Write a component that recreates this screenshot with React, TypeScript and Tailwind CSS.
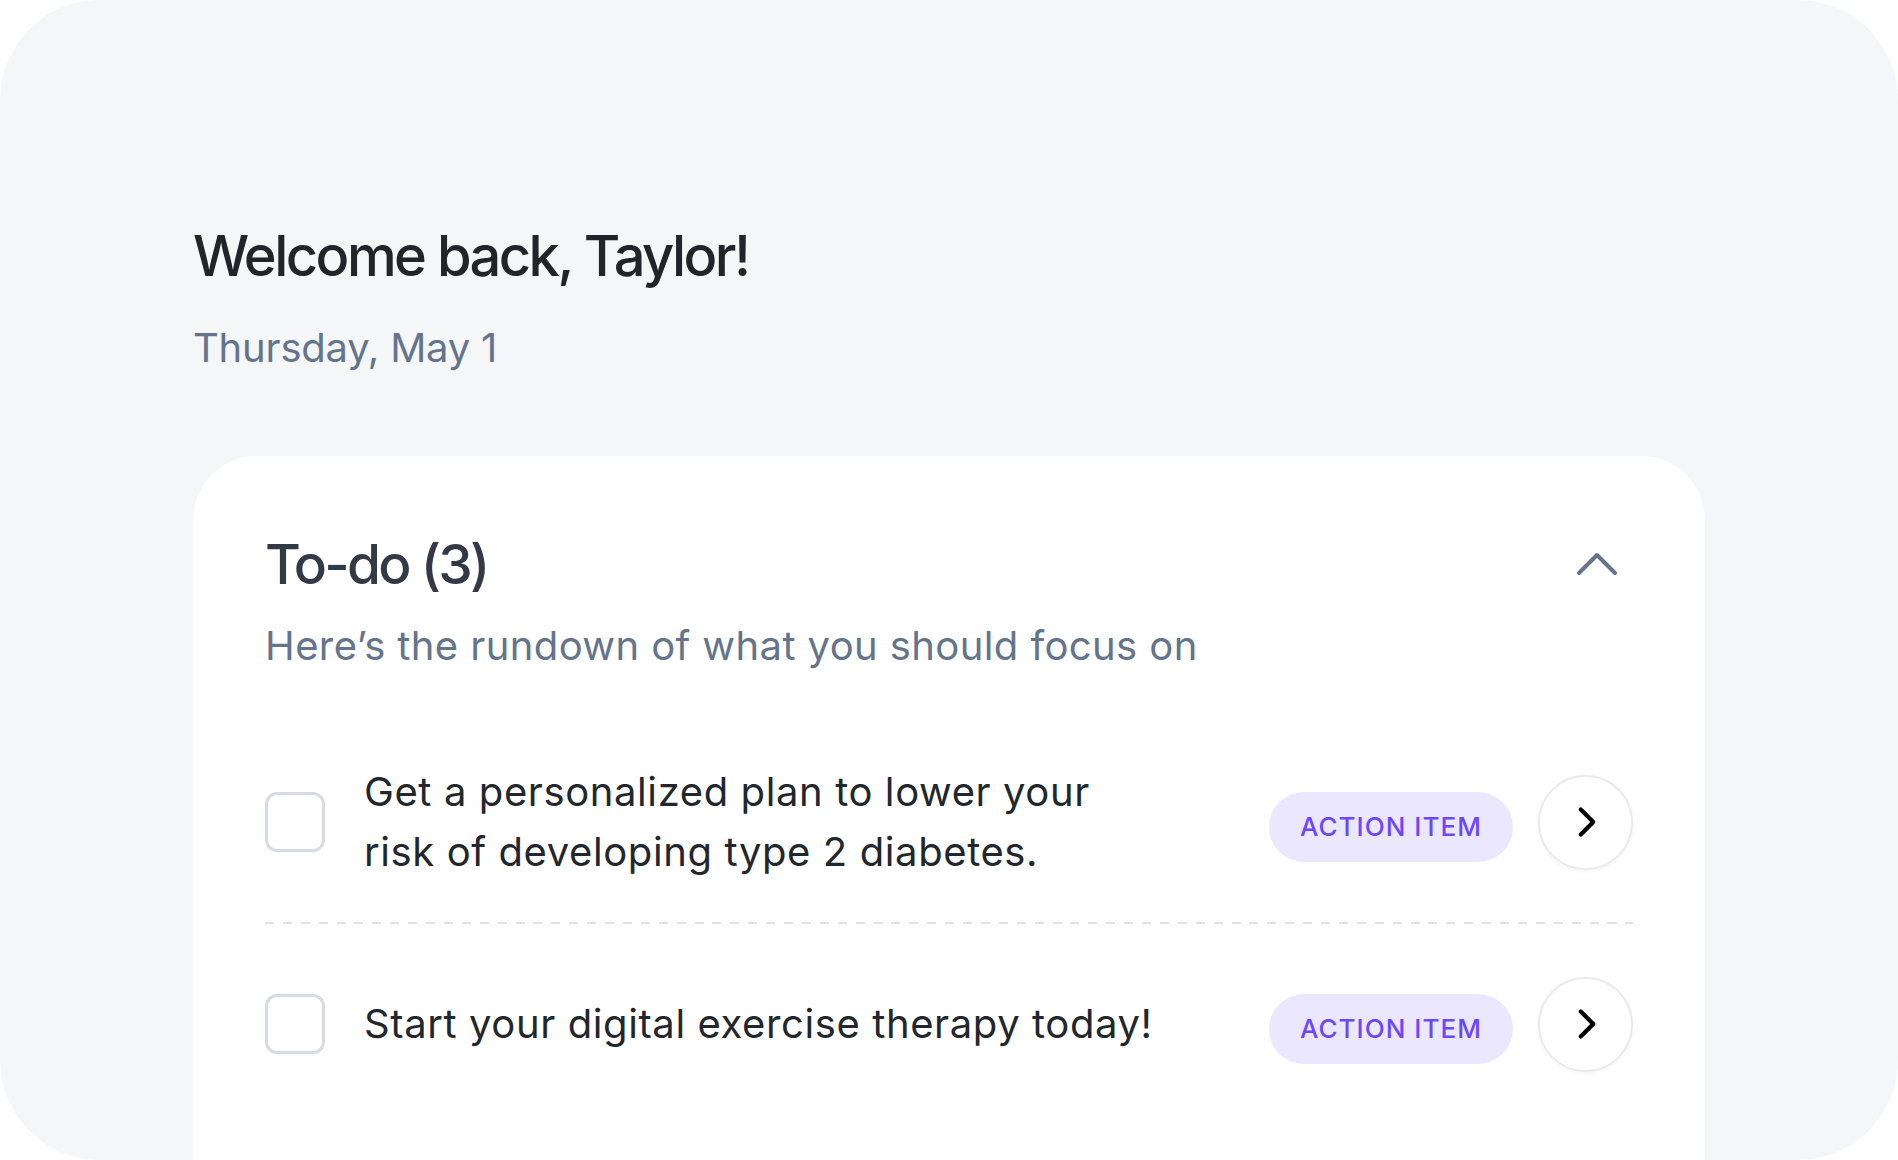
import { ChevronRight, ChevronUp } from "lucide-react";

function Badge() {
  return (
    <div className="mt-[10px] flex h-[70px] shrink-0 items-center rounded-full bg-[#ebe7fe] px-[31px] text-[26px] font-medium leading-none tracking-[0.04em] text-[#6c47ff]">
      ACTION ITEM
    </div>
  );
}

function GoButton() {
  return (
    <div className="ml-[25px] flex h-[95px] w-[95px] shrink-0 items-center justify-center rounded-full border-2 border-[#e9eaf0] bg-white shadow-[0_2px_4px_rgba(0,0,0,0.04)]">
      <ChevronRight size={50} strokeWidth={2} color="#000000" className="ml-[3px]" />
    </div>
  );
}

function Checkbox() {
  return <div className="h-[60px] w-[60px] shrink-0 rounded-[12px] border-[3px] border-[#d6dbe4] bg-white" />;
}

export default function App() {
  return (
    <div className="min-h-screen bg-white font-[Inter,sans-serif]">
      <div className="h-[1160px] w-[1898px] overflow-hidden rounded-[100px] bg-[#f5f6f8] px-[193px] pt-[222px]">
        <h1 className="text-[56px] font-medium leading-[68px] tracking-[-0.045em] text-[#212529]">
          Welcome back, Taylor!
        </h1>
        <p className="mt-[34px] text-[40px] leading-[48px] tracking-[-0.005em] text-[#64748b]">Thursday, May 1</p>

        <div className="mt-[84px] rounded-[64px] bg-white px-[72px] pb-[200px] pt-[72px]">
          <div className="flex items-center justify-between">
            <h2 className="text-[55px] font-medium leading-[66px] tracking-[-0.05em] text-[#333a45]">
              To-do (3)
            </h2>
            <ChevronUp size={72} strokeWidth={1.33} color="#64748b" />
          </div>
          <p className="mt-[22px] text-[40px] leading-[48px] tracking-[0.01em] text-[#64748b]">
            Here’s the rundown of what you should focus on
          </p>

          <div className="mt-[52px]">
            <div className="flex h-[200px] items-center">
              <Checkbox />
              <p className="ml-[39px] flex-1 text-[40px] leading-[60px] tracking-[0.015em] text-[#22272e]">
                Get a personalized plan to lower your
                <br />
                risk of developing type 2 diabetes.
              </p>
              <Badge />
              <GoButton />
            </div>
            <div className="h-[2px] w-full bg-[repeating-linear-gradient(to_right,#e1e2e8_0px,#e1e2e8_9px,transparent_9px,transparent_17.9px)]" />
            <div className="flex h-[200px] items-center">
              <Checkbox />
              <p className="ml-[39px] flex-1 text-[40px] leading-[60px] tracking-[0.015em] text-[#22272e]">
                Start your digital exercise therapy today!
              </p>
              <Badge />
              <GoButton />
            </div>
          </div>
        </div>
      </div>
    </div>
  );
}
